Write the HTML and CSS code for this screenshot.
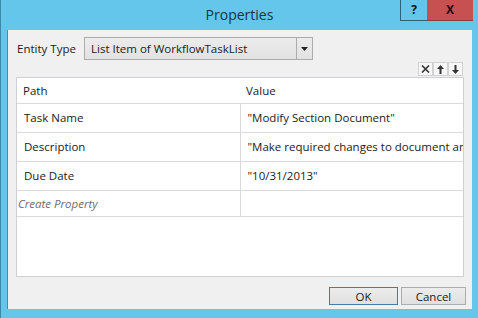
FILE: index.html
```html
<!DOCTYPE html>
<html lang="en">
<head>
    <meta charset="UTF-8">
    <title>Properties</title>
    <link rel="stylesheet" href="styles.css">
</head>
<body>
<div class="window">
    <div class="titlebar">
        <span></span>
        <div class="title">Properties</div>
        <div class="caption-buttons">
            <div class="help-btn">?</div>
            <div class="close-btn">X</div>
        </div>
    </div>

    <div class="client">
        <div class="entity-row">
            <label>Entity Type</label>
            <div class="combo">
                <span class="combo-text">List Item of WorkflowTaskList</span>
                <div class="combo-btn">
                    <svg width="7" height="4" viewBox="0 0 7 4"><path d="M0 0H7L3.5 4Z" fill="#222"/></svg>
                </div>
            </div>
        </div>

        <div class="toolbar">
            <div class="tool-btn">
                <svg width="9" height="8" viewBox="0 0 9 8"><path d="M1 0.5L8 7.5M8 0.5L1 7.5" stroke="#333" stroke-width="1.6"/></svg>
            </div>
            <div class="tool-btn">
                <svg width="7" height="9" viewBox="0 0 7 9"><path d="M3.5 0L7 4H4.5V9H2.5V4H0Z" fill="#333"/></svg>
            </div>
            <div class="tool-btn">
                <svg width="7" height="9" viewBox="0 0 7 9"><path d="M3.5 9L7 5H4.5V0H2.5V5H0Z" fill="#333"/></svg>
            </div>
        </div>

        <div class="grid">
            <table>
                <colgroup><col class="col-path"><col></colgroup>
                <tr class="head">
                    <td>Path</td>
                    <td>Value</td>
                </tr>
                <tr>
                    <td>Task Name</td>
                    <td>"Modify Section Document"</td>
                </tr>
                <tr>
                    <td>Description</td>
                    <td>"Make required changes to document and submit for review"</td>
                </tr>
                <tr>
                    <td>Due Date</td>
                    <td>"10/31/2013"</td>
                </tr>
                <tr class="create">
                    <td>Create Property</td>
                    <td></td>
                </tr>
            </table>
        </div>

        <div class="footer">
            <button class="btn btn-ok">OK</button>
            <button class="btn">Cancel</button>
        </div>
    </div>
</div>
</body>
</html>
```

FILE: styles.css
```css
* {
    margin: 0;
    padding: 0;
    box-sizing: border-box;
    font-family: 'Open Sans', 'Noto Sans', sans-serif;
}
body {
    background: #63c6ea;
    width: 478px;
    height: 318px;
    overflow: hidden;
}
.window {
    width: 478px;
    height: 318px;
    background: #63c6ea;
    border-left: 1px solid #3a87a8;
    display: flex;
    flex-direction: column;
}
.titlebar {
    height: 30px;
    display: grid;
    grid-template-columns: 1fr auto 1fr;
}
.title {
    font-size: 14px;
    color: #163445;
    line-height: 29px;
}
.caption-buttons {
    display: flex;
    justify-content: flex-end;
    align-items: flex-start;
    margin-right: 5px;
}
.help-btn {
    width: 27px;
    height: 21px;
    border: 1px solid #2c627c;
    border-top: none;
    border-right: none;
    text-align: center;
    font-weight: bold;
    font-size: 12px;
    line-height: 19px;
    color: #111;
}
.close-btn {
    width: 46px;
    height: 21px;
    background: #c75050;
    border-bottom: 1px solid #8e3a3a;
    text-align: center;
    font-weight: bold;
    font-size: 12px;
    line-height: 20px;
    color: #111;
}
.client {
    flex: 1;
    margin: 0 6px 9px 6px;
    background: #f0f0f0;
    border-left: 1px solid #3c8fb2;
    padding: 7px 6px 4px 8px;
    display: flex;
    flex-direction: column;
    font-size: 11.5px;
    color: #1b1b1b;
}
.entity-row {
    display: flex;
    align-items: center;
    height: 23px;
}
.entity-row label {
    width: 68px;
    padding-left: 1px;
}
.combo {
    width: 229px;
    height: 23px;
    display: flex;
    border: 1px solid #acacac;
    background: linear-gradient(#ececec, #e2e2e2);
}
.combo-text {
    flex: 1;
    padding-left: 6px;
    line-height: 21px;
}
.combo-btn {
    width: 16px;
    border-left: 1px solid #acacac;
    display: flex;
    align-items: center;
    justify-content: center;
}
.toolbar {
    display: flex;
    justify-content: flex-end;
    margin: 2px 3px 1px 0;
    height: 14px;
}
.tool-btn {
    width: 15px;
    height: 14px;
    border: 1px solid #d2d2d2;
    background: #f7f7f7;
    display: flex;
    align-items: center;
    justify-content: center;
}
.grid {
    height: 200px;
    margin-right: 2px;
    border: 1px solid #cfcfd6;
    background: #fff;
    overflow: hidden;
}
table {
    width: 100%;
    table-layout: fixed;
    border-collapse: collapse;
}
.col-path {
    width: 223px;
}
td {
    height: 29px;
    padding-left: 7px;
    border-bottom: 1px solid #dadada;
    white-space: nowrap;
    overflow: hidden;
}
td:first-child {
    border-right: 1px solid #dadada;
}
.head td {
    height: 25px;
    padding-left: 6px;
    border-right: none;
}
.create td {
    height: 26px;
}
.create td:first-child {
    padding-left: 1px;
    font-style: italic;
    color: #6e6e6e;
}
.footer {
    margin-top: 10px;
    display: flex;
    justify-content: flex-end;
    gap: 3px;
}
.btn {
    height: 18px;
    width: 65px;
    border: 1px solid #acacac;
    background: linear-gradient(#ececec, #e0e0e0);
    font-size: 11.5px;
    color: #1b1b1b;
}
.btn-ok {
    width: 69px;
    border-color: #3c7fb1;
}
```
